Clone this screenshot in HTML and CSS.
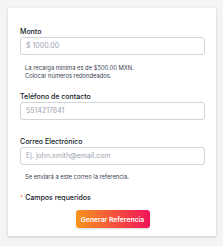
FILE: index.html
```html
<!DOCTYPE html>
<html lang="es">
<head>
<meta charset="utf-8">
<link rel="stylesheet" href="styles.css">
</head>
<body>
<div class="card">
  <form class="form">
    <div class="field">
      <label class="label">Monto</label>
      <div class="input placeholder">$ 1000.00</div>
      <p class="help">La recarga mínima es de $500.00 MXN.<br>Colocar números redondeados.</p>
    </div>
    <div class="field field-tel">
      <label class="label">Teléfono de contacto</label>
      <div class="input placeholder">5514217841</div>
    </div>
    <div class="field field-mail">
      <label class="label">Correo Electrónico</label>
      <div class="input placeholder">Ej. john.smith@email.com</div>
      <p class="help help-mail">Se enviará a este correo la referencia.</p>
    </div>
    <div class="required"><span class="star">*</span>Campos requeridos</div>
    <div class="actions">
      <button type="button" class="btn">Generar Referencia</button>
    </div>
  </form>
</div>
</body>
</html>
```

FILE: styles.css
```css
* { box-sizing: border-box; }
html, body { margin: 0; }
body {
  background: #f3f4f6;
  padding: 8px 7px 10px 8px;
  font-family: Inter, "Noto Sans", sans-serif;
  color: #111827;
}
.card {
  background: #ffffff;
  height: 228px;
  box-shadow: 0 1px 3px rgba(0,0,0,0.12), 0 1px 2px rgba(0,0,0,0.06);
  padding: 19px 11px 0 12px;
}
.form { display: flex; flex-direction: column; }
.label {
  display: block;
  font-size: 7px;
  font-weight: 500;
  line-height: 10px;
  color: #111827;
}
.input {
  height: 18px;
  border: 1px solid #d1d5db;
  border-radius: 3px;
  padding: 0 5px;
  font-size: 7px;
  line-height: 16px;
  color: #9ca3af;
}
.help {
  margin: 9px 0 0;
  padding-left: 5px;
  font-size: 5.8px;
  line-height: 8px;
  color: #374151;
}
.field-tel { margin-top: 12px; }
.field-mail { margin-top: 17px; }
.help-mail { margin-top: 8px; }
.required {
  margin-top: 12px;
  font-size: 7px;
  font-weight: 500;
  line-height: 10px;
  color: #111827;
}
.star { color: #f97316; font-size: 6px; margin-right: 2px; vertical-align: top; }
.actions { display: flex; justify-content: center; margin-top: 7px; }
.btn {
  width: 74px;
  height: 18px;
  border: 0;
  border-radius: 3px;
  background: linear-gradient(90deg, #f7941d, #f0145a);
  color: #ffffff;
  font-family: Inter, "Noto Sans", sans-serif;
  font-size: 6.8px;
  font-weight: 600;
  padding: 0;
  box-shadow: 0 1px 2px rgba(0,0,0,0.15);
}
```
